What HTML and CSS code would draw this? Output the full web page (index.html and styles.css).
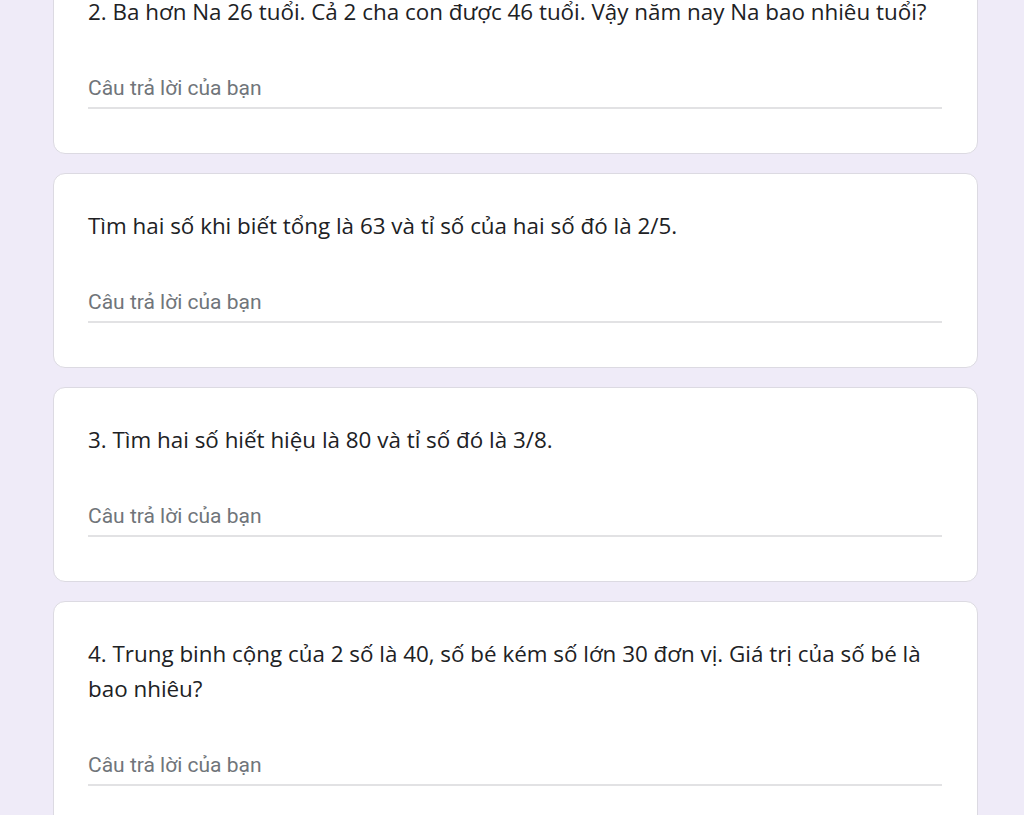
FILE: index.html
```html
<!DOCTYPE html>
<html lang="vi">
<head>
<meta charset="utf-8">
<link rel="stylesheet" href="styles.css">
</head>
<body>
<main class="form">
  <section class="card">
    <div class="question">2. Ba hơn Na 26 tuổi. Cả 2 cha con được 46 tuổi. Vậy năm nay Na bao nhiêu tuổi?</div>
    <div class="answer">Câu trả lời của bạn</div>
  </section>
  <section class="card">
    <div class="question">Tìm hai số khi biết tổng là 63 và tỉ số của hai số đó là 2/5.</div>
    <div class="answer">Câu trả lời của bạn</div>
  </section>
  <section class="card">
    <div class="question">3. Tìm hai số hiết hiệu là 80 và tỉ số đó là 3/8.</div>
    <div class="answer">Câu trả lời của bạn</div>
  </section>
  <section class="card">
    <div class="question">4. Trung binh cộng của 2 số là 40, số bé kém số lớn 30 đơn vị. Giá trị của số bé là bao nhiêu?</div>
    <div class="answer">Câu trả lời của bạn</div>
  </section>
</main>
</body>
</html>
```
FILE: styles.css
```css
html, body {
  margin: 0;
  padding: 0;
  background: #efebf8;
  height: 815px;
  overflow: hidden;
}
.form {
  margin: -41px 46px 0 53px;
  display: flex;
  flex-direction: column;
  gap: 19px;
}
.card {
  background: #ffffff;
  border: 1px solid #dcdae2;
  border-radius: 12px;
  padding: 34px 35px 44px 34px;
}
.question {
  font-family: "Open Sans", "Liberation Sans", sans-serif;
  font-size: 22.4px;
  line-height: 35px;
  color: #202124;
}
.answer {
  margin-top: 45px;
  font-family: "Roboto", "Liberation Sans", sans-serif;
  font-size: 21px;
  line-height: 28px;
  color: #70757a;
  padding-bottom: 5px;
  border-bottom: 2px solid #e2e2e4;
}
```
